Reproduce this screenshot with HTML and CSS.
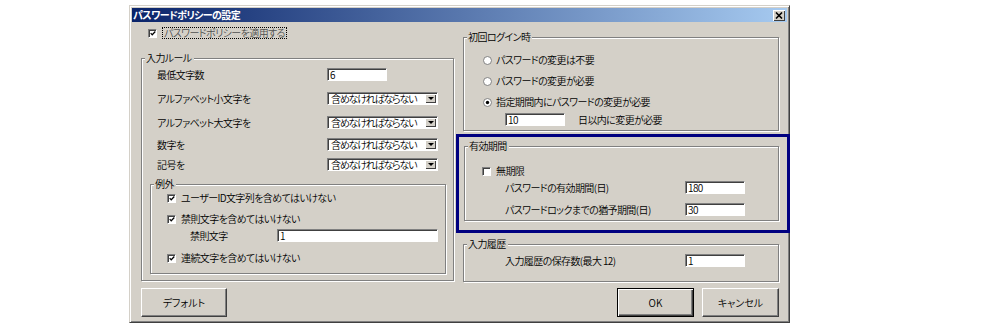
FILE: index.html
```html
<!DOCTYPE html>
<html>
<head>
    <title>パスワードポリシーの設定</title>
    <link rel="stylesheet" href="styles.css">
</head>
<body>
    <div class="dialog">
        <div class="titlebar">
            <span class="title">パスワードポリシーの設定</span>
            <span class="close">
                <svg width="8" height="7" viewBox="0 0 8 7"><path d="M1 0.5 L7 6.5 M7 0.5 L1 6.5" stroke="#000" stroke-width="1.6"/></svg>
            </span>
        </div>

        <div class="body">
            <!-- left column -->
            <div class="col left">
                <div class="check apply">
                    <span class="box"><svg width="7" height="7" viewBox="0 0 7 7"><path d="M0.8 3 L2.6 5 L6.2 1.2" fill="none" stroke="#000" stroke-width="1.4"/></svg></span>
                    <span class="focus">パスワードポリシーを適用する</span>
                </div>

                <div class="group rules">
                    <span class="legend">入力ルール</span>
                    <div class="field f1"><span class="lbl">最低文字数</span><span class="edit w60">6</span></div>
                    <div class="field f2"><span class="lbl">アルファベット小文字を</span><span class="combo"><span class="combo-text">含めなければならない</span><span class="arrow"></span></span></div>
                    <div class="field f3"><span class="lbl">アルファベット大文字を</span><span class="combo"><span class="combo-text">含めなければならない</span><span class="arrow"></span></span></div>
                    <div class="field f4"><span class="lbl">数字を</span><span class="combo"><span class="combo-text">含めなければならない</span><span class="arrow"></span></span></div>
                    <div class="field f5"><span class="lbl">記号を</span><span class="combo"><span class="combo-text">含めなければならない</span><span class="arrow"></span></span></div>

                    <div class="group except">
                        <span class="legend">例外</span>
                        <div class="check e1">
                            <span class="box"><svg width="7" height="7" viewBox="0 0 7 7"><path d="M0.8 3 L2.6 5 L6.2 1.2" fill="none" stroke="#000" stroke-width="1.4"/></svg></span>
                            <span>ユーザーID文字列を含めてはいけない</span>
                        </div>
                        <div class="check e2">
                            <span class="box"><svg width="7" height="7" viewBox="0 0 7 7"><path d="M0.8 3 L2.6 5 L6.2 1.2" fill="none" stroke="#000" stroke-width="1.4"/></svg></span>
                            <span>禁則文字を含めてはいけない</span>
                        </div>
                        <div class="field e3"><span class="lbl-ng">禁則文字</span><span class="edit w161">1</span></div>
                        <div class="check e4">
                            <span class="box"><svg width="7" height="7" viewBox="0 0 7 7"><path d="M0.8 3 L2.6 5 L6.2 1.2" fill="none" stroke="#000" stroke-width="1.4"/></svg></span>
                            <span>連続文字を含めてはいけない</span>
                        </div>
                    </div>
                </div>

                <div class="buttons">
                    <button class="btn-default">デフォルト</button>
                </div>
            </div>

            <!-- right column -->
            <div class="col right">
                <div class="group first">
                    <span class="legend">初回ログイン時</span>
                    <div class="option o1">
                        <svg class="radio" width="9" height="9" viewBox="0 0 9 9"><circle cx="4.5" cy="4.5" r="4" fill="#fff" stroke="#808080"/></svg>
                        <span>パスワードの変更は不要</span>
                    </div>
                    <div class="option o2">
                        <svg class="radio" width="9" height="9" viewBox="0 0 9 9"><circle cx="4.5" cy="4.5" r="4" fill="#fff" stroke="#808080"/></svg>
                        <span>パスワードの変更が必要</span>
                    </div>
                    <div class="option o3">
                        <svg class="radio" width="9" height="9" viewBox="0 0 9 9"><circle cx="4.5" cy="4.5" r="4" fill="#fff" stroke="#808080"/><circle cx="4.5" cy="4.5" r="1.7" fill="#000"/></svg>
                        <span>指定期間内にパスワードの変更が必要</span>
                    </div>
                    <div class="field days"><span class="edit w60">10</span><span class="days-text">日以内に変更が必要</span></div>
                </div>

                <div class="highlight">
                    <div class="group expiry">
                        <span class="legend">有効期間</span>
                        <div class="check x1">
                            <span class="box"></span>
                            <span>無期限</span>
                        </div>
                        <div class="field x2"><span class="lbl-wide">パスワードの有効期間(日)</span><span class="edit w60">180</span></div>
                        <div class="field x3"><span class="lbl-wide">パスワードロックまでの猶予期間(日)</span><span class="edit w60">30</span></div>
                    </div>
                </div>

                <div class="group history">
                    <span class="legend">入力履歴</span>
                    <div class="field h1"><span class="lbl-wide">入力履歴の保存数(最大 12)</span><span class="edit w60">1</span></div>
                </div>

                <div class="buttons">
                    <button class="btn-ok">OK</button>
                    <button class="btn-cancel">キャンセル</button>
                </div>
            </div>
        </div>
    </div>
</body>
</html>
```

FILE: styles.css
```css
body { margin: 0; background: #fff; color: #000; font-family: "Noto Sans CJK JP", sans-serif; font-size: 10px; font-weight: 350; letter-spacing: -0.6px; font-feature-settings: "palt"; }

.dialog { box-sizing: border-box; width: 661px; height: 318px; margin: 5px 0 0 129px; padding: 2px; background: #d4d0c8; border: 1px solid; border-color: #d4d0c8 #404040 #404040 #d4d0c8; box-shadow: inset 1px 1px #fff, inset -1px -1px #808080; display: flex; flex-direction: column; }

.titlebar { height: 14px; flex: none; display: flex; align-items: center; justify-content: space-between; padding: 0 2px 0 1px; background: linear-gradient(to right, #0a246a, #a6caf0); }
.title { color: #fff; font-weight: bold; line-height: 14px; }
.close { box-sizing: border-box; width: 12px; height: 11px; display: flex; align-items: center; justify-content: center; background: #d4d0c8; box-shadow: inset 1px 1px #fff, inset -1px -1px #404040; }

.body { flex: 1; display: flex; gap: 9px; padding: 0 8px 3px 9px; }
.col { display: flex; flex-direction: column; }
.left { width: 313px; }
.right { width: 316px; }

/* group box */
.group { border: 1px solid #808080; box-shadow: inset 1px 1px #fff, 1px 1px #fff; }
.legend { display: block; width: max-content; margin: -7px 0 0 3px; padding: 0 2px 0 1px; background: #d4d0c8; line-height: 12px; }

/* controls */
.check, .option { display: flex; align-items: center; height: 12px; line-height: 12px; white-space: nowrap; }
.check { gap: 5px; }
.option { gap: 4px; }
.box { box-sizing: border-box; width: 9px; height: 9px; flex: none; display: flex; align-items: center; justify-content: center; background: #fff; border: 1px solid; border-color: #808080 #fff #fff #808080; box-shadow: inset 1px 1px #404040; }
.box svg { margin: 1px 0 0 1px; }
.radio { flex: none; }
.focus { color: #505050; border: 1px dotted #000; padding: 0 1px; line-height: 10px; }

.field { display: flex; align-items: center; height: 13px; white-space: nowrap; }
.lbl { width: 170px; }
.lbl-ng { width: 87px; }
.lbl-wide { width: 180px; }

.edit { box-sizing: border-box; height: 13px; padding-left: 2px; line-height: 11px; background: #fff; border: 1px solid; border-color: #808080 #fff #fff #808080; box-shadow: inset 1px 1px #404040; }
.w60 { width: 60px; }
.w161 { width: 161px; }

.combo { box-sizing: border-box; width: 111px; height: 13px; display: flex; padding: 1px; background: #fff; border: 1px solid; border-color: #808080 #fff #fff #808080; box-shadow: inset 1px 1px #404040; }
.combo-text { flex: 1; padding-left: 2px; line-height: 10px; letter-spacing: -1.2px; }
.arrow { box-sizing: border-box; width: 11px; height: 9px; flex: none; display: flex; align-items: center; justify-content: center; background: #d4d0c8; box-shadow: inset 1px 1px #fff, inset -1px -1px #404040; }
.arrow::after { content: ""; border-left: 3px solid transparent; border-right: 3px solid transparent; border-top: 3px solid #000; }

/* left column */
.apply { margin: 5px 0 0 7px; }
.rules { margin-top: 19px; padding-bottom: 6px; }
.rules > .field { margin-left: 15px; }
.f1 { margin-top: 4px; }
.f2 { margin-top: 11px; }
.f3 { margin-top: 11px; }
.f4 { margin-top: 9px; }
.f5 { margin-top: 7px; }

.except { margin: 13px 7px 0 8px; padding-bottom: 9px; }
.e1 { margin: 2px 0 0 16px; }
.e2 { margin: 9px 0 0 16px; }
.e3 { margin: 4px 0 0 39px; }
.e4 { margin: 10px 0 0 16px; }

/* right column */
.first { margin-top: 15px; padding-bottom: 4px; }
.o1 { margin: 11px 0 0 19px; }
.o2 { margin: 9px 0 0 19px; }
.o3 { margin: 9px 0 0 19px; }
.days { margin: 5px 0 0 41px; }
.days-text { margin-left: 13px; }

.highlight { margin: 3px -11px 0 -7px; padding: 9px 8px 9px 5px; border: 3px solid #000080; }
.expiry { padding-bottom: 4px; }
.x1 { margin: 13px 0 0 17px; }
.x2 { margin: 4px 0 0 40px; }
.x3 { margin: 9px 0 0 40px; }

.history { margin-top: 11px; padding-bottom: 14px; }
.h1 { margin: 4px 0 0 41px; }

/* buttons */
.buttons { margin-top: auto; display: flex; gap: 8px; }
.right .buttons { justify-content: flex-end; }
button { box-sizing: border-box; height: 29px; padding: 0; font: inherit; color: #000; background: #d4d0c8; border: 1px solid; border-color: #fff #404040 #404040 #fff; box-shadow: inset -1px -1px #808080; }
.btn-default { width: 86px; }
.btn-ok { width: 77px; border-color: #000; box-shadow: inset 1px 1px #fff, inset -1px -1px #404040, inset -2px -2px #808080; }
.btn-cancel { width: 77px; }
```
